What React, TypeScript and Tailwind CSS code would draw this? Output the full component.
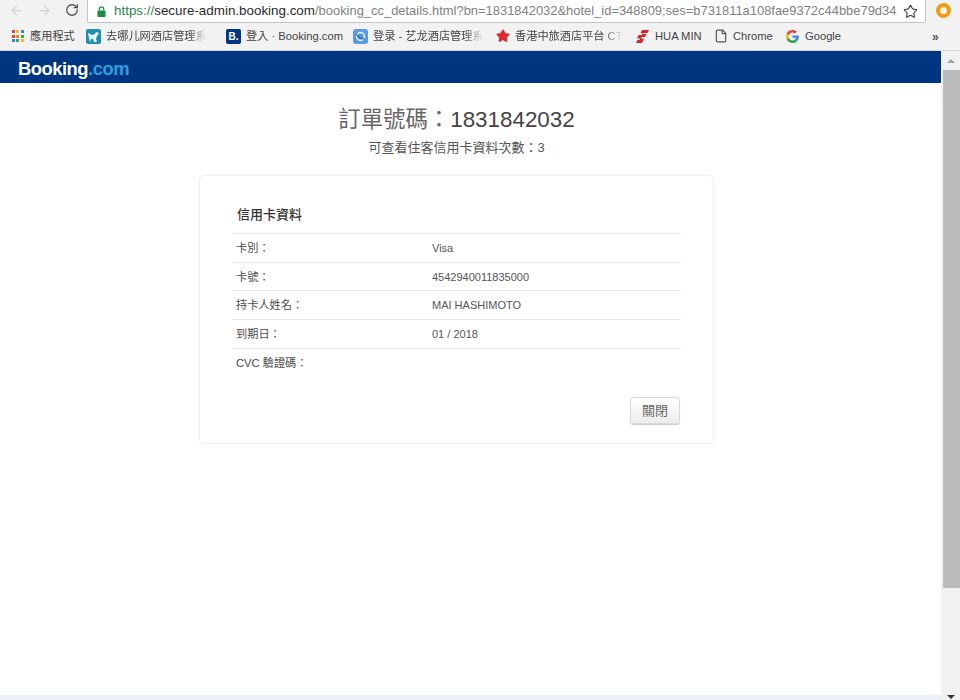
import { ArrowLeft, ArrowRight, File, RotateCw, Star } from "lucide-react"

const FONT = "font-['Liberation_Sans','Noto_Sans_CJK_TC',sans-serif]"

const rows = [
  { label: "卡別：", value: "Visa" },
  { label: "卡號：", value: "4542940011835000" },
  { label: "持卡人姓名：", value: "MAI HASHIMOTO" },
  { label: "到期日：", value: "01 / 2018" },
  { label: "CVC 驗證碼：", value: "" },
]

const appsColors = [
  "bg-[#d9483b]", "bg-[#f3b73a]", "bg-[#3b7ded]",
  "bg-[#d9483b]", "bg-[#e8873a]", "bg-[#3fa75a]",
  "bg-[#3b7ded]", "bg-[#3fa75a]", "bg-[#f3b73a]",
]

function Bookmark({ icon, label, width, fade }: { icon: React.ReactNode; label: string; width: string; fade?: boolean }) {
  return (
    <div className={`flex items-center gap-[5px] whitespace-nowrap ${width}`}>
      <span className="flex h-[15px] w-[15px] shrink-0 items-center justify-center">{icon}</span>
      <span className={`text-[11.2px] text-[#444] ${fade ? "[mask-image:linear-gradient(to_right,black_82%,transparent)]" : ""}`}>
        {label}
      </span>
    </div>
  )
}

function Toolbar() {
  return (
    <div className="flex h-[23px] shrink-0 items-start bg-[#f2f2f2]">
      <div className="flex h-[20px] w-[87px] items-center pl-[9px] text-[#d4d4d4]">
        <ArrowLeft size={15} />
        <ArrowRight size={15} className="ml-[13px]" />
        <RotateCw size={14} strokeWidth={2.2} className="ml-[13px] text-[#4f4f4f]" />
      </div>
      <div className="flex h-[23px] w-[839px] items-center overflow-hidden rounded-b-[2px] border border-t-0 border-[#c4c4c4] bg-white pl-[9px] shadow-[0_1px_1px_rgba(0,0,0,0.08)]">
        <svg viewBox="0 0 10 12" className="h-[11px] w-[9px] shrink-0">
          <path d="M2.5 5V3.4a2.5 2.5 0 0 1 5 0V5" fill="none" stroke="#1f8a4c" strokeWidth="1.4" />
          <rect x="0.5" y="5" width="9" height="7" rx="1" fill="#1f8a4c" />
        </svg>
        <div className="ml-[8px] w-[785px] shrink-0 whitespace-nowrap pb-[2px] text-[12.93px] leading-[19px] text-[#808080]">
          <span className="text-[13.4px] text-[#1f8a4c]">https://</span>
          <span className="text-[13.4px] text-[#2a2a2a]">secure-admin.booking.com</span>
          /booking_cc_details.html?bn=1831842032&amp;hotel_id=348809;ses=b731811a108fae9372c44bbe79d34
        </div>
        <Star size={15} strokeWidth={1.8} className="ml-[4px] shrink-0 text-[#444]" />
      </div>
      <div className="flex h-[20px] flex-1 items-center justify-center">
        <span className="flex h-[15px] w-[15px] items-center justify-center rounded-full bg-[#ef9b15]">
          <span className="h-[7px] w-[7px] rounded-full bg-[#fdf1d8]" />
        </span>
      </div>
    </div>
  )
}

function BookmarksBar() {
  return (
    <div className="flex h-[28px] shrink-0 items-center gap-[9px] border-b border-[#d6d6d6] bg-[#f2f2f2] pl-[10px]">
      <Bookmark
        width="w-[67px]"
        label="應用程式"
        icon={
          <span className="grid grid-cols-3 gap-[1.5px]">
            {appsColors.map((c, i) => (
              <span key={i} className={`h-[3px] w-[3px] ${c}`} />
            ))}
          </span>
        }
      />
      <Bookmark
        width="w-[131px]"
        label="去哪儿网酒店管理系"
        fade
        icon={
          <svg viewBox="0 0 15 15" className="h-[15px] w-[15px]">
            <rect width="15" height="15" rx="2" fill="#1f8fb0" />
            <path d="M2 4l4 2 3-1 1-2 3 1-1 2-1 1-1 3 1 3H8L7 10H5l-1 3-1-4z" fill="#e6f5f8" />
          </svg>
        }
      />
      <Bookmark
        width="w-[118px]"
        label="登入 · Booking.com"
        icon={
          <span className="flex h-[15px] w-[15px] items-center justify-center rounded-[2px] bg-[#003580] text-[10px] font-bold text-white">
            B.
          </span>
        }
      />
      <Bookmark
        width="w-[133px]"
        label="登录 - 艺龙酒店管理系"
        fade
        icon={
          <svg viewBox="0 0 15 15" className="h-[15px] w-[15px]">
            <rect width="15" height="15" rx="3" fill="#5a9be0" />
            <circle cx="7.5" cy="7.5" r="4" fill="none" stroke="#e8f1fb" strokeWidth="1.5" />
            <path d="M3 5c3 4 6 5 9 5" fill="none" stroke="#2a5fa8" strokeWidth="1.2" />
          </svg>
        }
      />
      <Bookmark
        width="w-[131px]"
        label="香港中旅酒店平台 CT"
        fade
        icon={<Star size={14} className="fill-[#e0282e] text-[#e0282e]" />}
      />
      <Bookmark
        width="w-[69px]"
        label="HUA MIN"
        icon={
          <svg viewBox="0 0 15 15" className="h-[15px] w-[15px]">
            <path d="M7 1h7l-1.5 3H8.5L8 5h3.5L10 8H6.5L6 9.5h3L7 14H1l1.5-3h2l.5-1.5H2L3.5 6H7l.5-2H5.5z" fill="#d5232a" />
          </svg>
        }
      />
      <Bookmark width="w-[63px]" label="Chrome" icon={<File size={14} className="text-[#555]" />} />
      <Bookmark
        width="w-[60px]"
        label="Google"
        icon={
          <svg viewBox="0 0 48 48" className="h-[13px] w-[13px]">
            <path fill="#EA4335" d="M24 9.5c3.5 0 6.6 1.2 9.1 3.6l6.8-6.8C35.8 2.5 30.4 0 24 0 14.6 0 6.5 5.4 2.6 13.2l7.9 6.2C12.4 13.6 17.7 9.5 24 9.5z" />
            <path fill="#4285F4" d="M47.5 24.5c0-1.6-.2-3.1-.4-4.5H24v9h12.7c-.6 3-2.2 5.5-4.7 7.2l7.7 6c4.5-4.2 7.8-10.3 7.8-17.7z" />
            <path fill="#FBBC05" d="M10.5 28.6c-.5-1.4-.8-3-.8-4.6s.3-3.2.8-4.6l-7.9-6.2C.9 16.5 0 20.1 0 24s.9 7.5 2.6 10.8l7.9-6.2z" />
            <path fill="#34A853" d="M24 48c6.5 0 11.9-2.1 15.9-5.8l-7.7-6c-2.2 1.4-4.9 2.3-8.2 2.3-6.3 0-11.6-4.1-13.5-9.9l-7.9 6.2C6.5 42.6 14.6 48 24 48z" />
          </svg>
        }
      />
      <span className="ml-[78px] text-[12px] font-bold text-[#555]">»</span>
    </div>
  )
}

function Card() {
  return (
    <div className="mx-auto mt-[17px] w-[515px] rounded-[5px] border border-[#efefef] bg-white px-[32px] pb-[19px] pt-[29px]">
      <h2 className="pb-[8px] pl-[5px] text-[13px] font-medium leading-[20px] text-[#333]">信用卡資料</h2>
      <div className="text-[11.2px] text-[#4a4a4a]">
        {rows.map((row) => (
          <div key={row.label} className="flex h-[28.7px] items-center border-t border-[#e6e6e6] pl-[4px] pt-[1px]">
            <span className="w-[196px]">{row.label}</span>
            <span className="text-[11px] text-[#555]">{row.value}</span>
          </div>
        ))}
      </div>
      <div className="mt-[21px] flex justify-end pr-[1px]">
        <button className="h-[27px] w-[50px] rounded-[3px] border border-[#d9d9d9] bg-gradient-to-b from-white to-[#ececec] text-[13px] text-[#666] shadow-[0_1px_1px_rgba(0,0,0,0.2)]">
          關閉
        </button>
      </div>
    </div>
  )
}

function Scrollbar() {
  return (
    <div className="flex w-[19px] shrink-0 flex-col items-center bg-[#f1f1f1]">
      <div className="flex h-[19px] w-full items-center justify-center">
        <span className="border-x-[4px] border-b-[4px] border-x-transparent border-b-[#a3a3a3]" />
      </div>
      <div className="ml-[1px] h-[518px] w-[17px] bg-[#bcbcbc]" />
      <div className="flex-1" />
      <div className="flex h-[13px] w-full justify-center pt-[8px]">
        <span className="h-0 border-x-[4px] border-t-[4px] border-x-transparent border-t-[#333]" />
      </div>
    </div>
  )
}

export default function App() {
  return (
    <div className={`flex h-[700px] w-[960px] flex-col overflow-hidden bg-white ${FONT}`}>
      <Toolbar />
      <BookmarksBar />
      <div className="flex min-h-0 flex-1">
        <div className="flex min-w-0 flex-1 flex-col">
          <header className="flex h-[32px] shrink-0 items-center bg-[#003580] pl-[18px] pt-[4px] text-[18.4px] font-bold tracking-[-0.5px]">
            <span className="text-white">Booking</span>
            <span className="text-[#2d9fe0]">.com</span>
          </header>
          <main className="w-[913px] flex-1 pt-[23px]">
            <h1 className="text-center text-[22.4px] leading-[28px] text-[#444]">
              <span className="text-[#666]">訂單號碼：</span>1831842032
            </h1>
            <p className="mt-[4px] text-center text-[13px] leading-[20px] text-[#555]">可查看住客信用卡資料次數：3</p>
            <Card />
          </main>
          <div className="h-[5px] shrink-0 bg-[#e9f1f8]" />
        </div>
        <Scrollbar />
      </div>
    </div>
  )
}
